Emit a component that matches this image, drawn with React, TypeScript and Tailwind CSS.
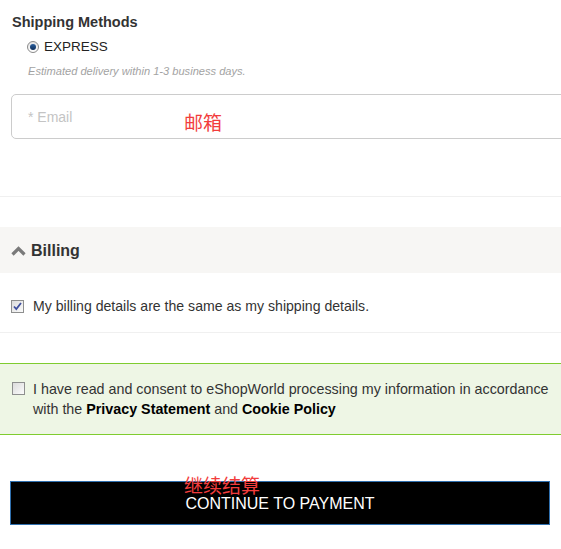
import React from "react";

function Checkbox({ checked, className }: { checked?: boolean; className?: string }) {
  return (
    <span
      className={
        "relative inline-block h-[13px] w-[13px] shrink-0 border border-[#8e8f8f] bg-gradient-to-br from-[#dcdcdc] to-[#fbfbfb] " +
        (className ?? "")
      }
    >
      {checked && (
        <svg viewBox="0 0 11 11" className="absolute left-0 top-0 h-[11px] w-[11px]">
          <path d="M2 5.5 L4.3 8 L9 2" fill="none" stroke="#3f4f9e" strokeWidth="1.8" />
        </svg>
      )}
    </span>
  );
}

export default function App() {
  return (
    <div className="relative w-[561px] overflow-hidden bg-white pb-[25px] font-['Liberation_Sans',Arial,sans-serif] text-[#333]">
      <div className="pl-[12px] pt-[14px]">
        <h3 className="text-[14.5px] font-bold leading-[17px] text-[#333]">Shipping Methods</h3>
        <label className="ml-[15px] mt-[7px] flex h-[18px] items-center gap-[5px] text-[13.5px] leading-[18px] text-[#222]">
          <span className="flex h-[12px] w-[12px] items-center justify-center rounded-full border border-[#8a8a8a] bg-gradient-to-b from-[#e4e4e4] to-white">
            <span className="h-[6px] w-[6px] rounded-full bg-gradient-to-b from-[#2a5f9e] to-[#0e2e5a]" />
          </span>
          EXPRESS
        </label>
        <p className="ml-[16px] mt-[8px] text-[11.1px] italic leading-[14px] text-[#a3a3a3]">
          Estimated delivery within 1-3 business days.
        </p>
      </div>

      <div className="ml-[11px] mt-[16px] flex h-[45px] w-[560px] items-center rounded-[5px] border border-[#cccccc] pl-[16px] pt-[2px] text-[14px] text-[#c4c4c4]">
        * Email
      </div>

      <div className="mt-[57px] h-px w-full bg-[#f0f0f0]" />

      <div className="mt-[30px] flex h-[46px] items-center gap-[5px] bg-[#f7f6f4] pl-[11px] pt-[2px]">
        <svg viewBox="0 0 15 10" className="h-[10px] w-[15px]">
          <polyline points="1.5,8.5 7.5,2.5 13.5,8.5" fill="none" stroke="#7a7a7a" strokeWidth="3.2" />
        </svg>
        <h3 className="text-[16px] font-bold text-[#333]">Billing</h3>
      </div>

      <label className="ml-[11px] mt-[23px] flex h-[20px] items-center gap-[9px] text-[14.1px] leading-[20px] text-[#333]">
        <Checkbox checked />
        My billing details are the same as my shipping details.
      </label>

      <div className="mt-[16px] h-px w-full bg-[#f0f0f0]" />

      <div className="mt-[30px] border-y border-[#7fcc2f] bg-[#eef6e5] pb-[15px] pl-[12px] pr-[8px] pt-[15px]">
        <div className="flex items-start gap-[8px] text-[14.3px] leading-[20px] text-[#333]">
          <Checkbox className="mt-[3px]" />
          <p>
            I have read and consent to eShopWorld processing my information in accordance with the{" "}
            <b className="text-black">Privacy Statement</b> and <b className="text-black">Cookie Policy</b>
          </p>
        </div>
      </div>

      <button className="ml-[10px] mt-[46px] flex h-[44px] w-[540px] items-center justify-center border border-[#2f6fae] bg-black pt-[1px] text-[16px] text-white">
        CONTINUE TO PAYMENT
      </button>

      <span className="absolute left-[184px] top-[111px] text-[19px] leading-[22px] text-[#f23d3d] font-['Noto_Sans_CJK_SC',sans-serif]">
        邮箱
      </span>
      <span className="absolute left-[184px] top-[474px] text-[19px] leading-[22px] text-[#f23d3d] font-['Noto_Sans_CJK_SC',sans-serif]">
        继续结算
      </span>
    </div>
  );
}
